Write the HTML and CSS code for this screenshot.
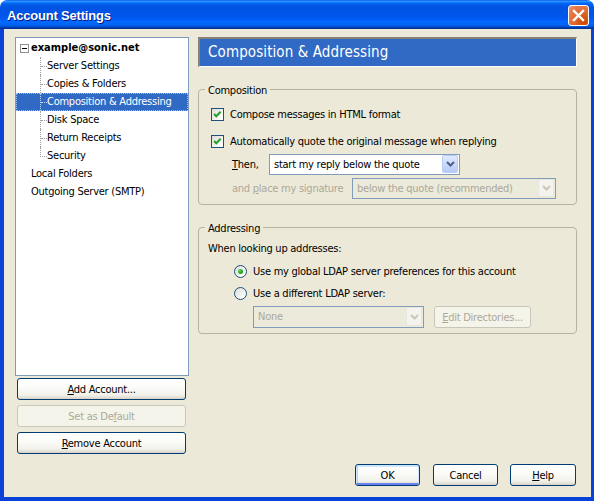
FILE: index.html
```html
<!DOCTYPE html>
<html>
<head>
<meta charset="utf-8">
<title>Account Settings</title>
<link rel="stylesheet" href="styles.css">
</head>
<body>
<div class="window">
  <div class="titlebar">
    <span class="title">Account Settings</span>
    <span class="close"><svg width="13" height="13" viewBox="0 0 13 13"><path d="M2 2 L11 11 M11 2 L2 11" stroke="#fff" stroke-width="2.4" stroke-linecap="square"/></svg></span>
  </div>
  <div class="frame">
    <div class="main">
      <div class="left">
        <div class="tree">
          <div class="row top"><span class="minus"></span><span class="acct">example@sonic.net</span></div>
          <div class="row child"><span class="twig"></span><span>Server Settings</span></div>
          <div class="row child"><span class="twig"></span><span>Copies &amp; Folders</span></div>
          <div class="row child selected"><span class="twig"></span><span>Composition &amp; Addressing</span></div>
          <div class="row child"><span class="twig"></span><span>Disk Space</span></div>
          <div class="row child"><span class="twig"></span><span>Return Receipts</span></div>
          <div class="row child"><span class="twig last"></span><span>Security</span></div>
          <div class="row root">Local Folders</div>
          <div class="row root">Outgoing Server (SMTP)</div>
        </div>
        <button class="btn side"><u>A</u>dd Account...</button>
        <button class="btn side disabled">Set as De<u>f</u>ault</button>
        <button class="btn side"><u>R</u>emove Account</button>
      </div>
      <div class="right">
        <div class="header">Composition &amp; Addressing</div>
        <div class="group comp">
          <span class="legend">Composition</span>
          <div class="crow"><span class="check"><svg width="11" height="11" viewBox="0 0 11 11"><path d="M2.2 5 L4.3 7.3 L8.6 2.8" fill="none" stroke="#21a121" stroke-width="2"/></svg></span>Compose messages in HTML format</div>
          <div class="crow second"><span class="check"><svg width="11" height="11" viewBox="0 0 11 11"><path d="M2.2 5 L4.3 7.3 L8.6 2.8" fill="none" stroke="#21a121" stroke-width="2"/></svg></span>Automatically quote the original message when replying</div>
          <div class="srow then">
            <span class="slabel then-label"><u>T</u>hen,</span>
            <span class="combo reply"><span class="ctext">start my reply below the quote</span><span class="cbtn"><svg width="9" height="6" viewBox="0 0 9 6"><path d="M1 1 L4.5 4.5 L8 1" fill="none" stroke="#4d6185" stroke-width="2"/></svg></span></span>
          </div>
          <div class="srow sig">
            <span class="slabel sig-label dim">and <u>p</u>lace my signature</span>
            <span class="combo off signature"><span class="ctext">below the quote (recommended)</span><span class="cbtn"><svg width="9" height="6" viewBox="0 0 9 6"><path d="M1 1 L4.5 4.5 L8 1" fill="none" stroke="#c9c7ba" stroke-width="2"/></svg></span></span>
          </div>
        </div>
        <div class="group addr">
          <span class="legend">Addressing</span>
          <div class="lrow">When looking up addresses:</div>
          <div class="rrow"><span class="radio on"></span>Use my global LDAP server preferences for this account</div>
          <div class="rrow second"><span class="radio"></span>Use a different LDAP server:</div>
          <div class="drow">
            <span class="combo off none"><span class="ctext">None</span><span class="cbtn"><svg width="9" height="6" viewBox="0 0 9 6"><path d="M1 1 L4.5 4.5 L8 1" fill="none" stroke="#c9c7ba" stroke-width="2"/></svg></span></span>
            <button class="btn disabled edit"><u>E</u>dit Directories...</button>
          </div>
        </div>
      </div>
    </div>
    <div class="footer">
      <button class="btn foot default">OK</button>
      <button class="btn foot cancel">Cancel</button>
      <button class="btn foot help"><u>H</u>elp</button>
    </div>
  </div>
</div>
</body>
</html>
```

FILE: styles.css
```css
html, body {
  margin: 0;
  padding: 0;
  background: #ffffff;
}

body {
  font-family: "DejaVu Sans Condensed", "Liberation Sans", sans-serif;
  font-size: 11px;
  letter-spacing: -0.25px;
  color: #000;
}

.window {
  width: 594px;
  height: 501px;
  display: flex;
  flex-direction: column;
  overflow: hidden;
}

.titlebar {
  height: 29px;
  flex: none;
  display: flex;
  align-items: center;
  justify-content: space-between;
  padding: 0 5px 0 7px;
  border-radius: 7px 7px 0 0;
  background: linear-gradient(to bottom, #0058ee 0%, #3593ff 4%, #288eff 6%, #127dff 8%, #036ffc 10%, #0262ee 14%, #0057e5 20%, #0054e3 24%, #0055eb 56%, #005bf5 66%, #026afe 76%, #0062ef 86%, #0052d6 92%, #0040ab 94%, #003092 100%);
}

.title {
  font-family: "Liberation Sans", sans-serif;
  font-weight: bold;
  font-size: 13px;
  letter-spacing: -0.2px;
  color: #fff;
  text-shadow: 1px 1px 0 #0a1883;
  margin-top: 2px;
}

.close {
  width: 21px;
  height: 21px;
  box-sizing: border-box;
  margin-top: 2px;
  border: 1px solid #fff;
  border-radius: 3px;
  background: radial-gradient(circle at 80% 85%, #cc4600 0%, #dc6527 40%, #e87c52 80%, #f0a088 100%);
  display: flex;
  align-items: center;
  justify-content: center;
}

.close svg {
  display: block;
}

.frame {
  flex: 1;
  background: #ece9d8;
  border-left: 4px solid #0842d8;
  border-right: 3px solid #0842d8;
  border-bottom: 4px solid #0842d8;
  display: flex;
  flex-direction: column;
}

.main {
  display: flex;
  padding: 8px 0 0 11px;
  gap: 9px;
}

.left {
  width: 174px;
  display: flex;
  flex-direction: column;
}

.tree {
  height: 339px;
  box-sizing: border-box;
  border: 1px solid #7f9db9;
  background: #fff;
  padding-top: 1px;
}

.row {
  height: 18px;
  display: flex;
  align-items: center;
  white-space: nowrap;
  line-height: 18px;
}

.row.top {
  padding-left: 4px;
}

.minus {
  width: 9px;
  height: 9px;
  box-sizing: border-box;
  border: 1px solid #919191;
  background: #fff;
  margin-right: 2px;
  display: flex;
  align-items: center;
  justify-content: center;
}

.minus::after {
  content: "";
  width: 5px;
  height: 1px;
  background: #000;
}

.acct {
  font-weight: bold;
  letter-spacing: 0;
}

.twig {
  width: 7px;
  height: 18px;
  box-sizing: border-box;
  margin-left: 24px;
  align-self: flex-start;
  border-left: 1px dotted #a0a0a0;
}

.twig::after {
  content: "";
  display: block;
  width: 6px;
  height: 9px;
  border-bottom: 1px dotted #a0a0a0;
}

.twig.last {
  border-left: none;
}

.twig.last::after {
  border-left: 1px dotted #a0a0a0;
}

.row.selected {
  background: #316ac5;
  color: #fff;
  outline: 1px dotted #a6bde6;
  outline-offset: -1px;
}

.row.selected .twig,
.row.selected .twig::after {
  border-color: #c8d6f0;
}

.row.root {
  padding-left: 15px;
}

.btn {
  font-family: inherit;
  font-size: 11px;
  letter-spacing: -0.25px;
  color: #000;
  height: 22px;
  padding: 0;
  box-sizing: border-box;
  border: 1px solid #003c74;
  border-radius: 3px;
  background: linear-gradient(to bottom, #ffffff 0%, #fbfbf9 40%, #f2f1ea 80%, #e3e0d6 92%, #d6d0c5 100%);
}

.btn u {
  text-decoration: underline;
}

.btn.disabled {
  border-color: #c9c7ba;
  color: #aca899;
  background: #f5f4ea;
}

.btn.side {
  width: 169px;
  margin-left: 2px;
  margin-top: 5px;
}

.btn.side:first-of-type {
  margin-top: 2px;
}

.right {
  width: 379px;
  display: flex;
  flex-direction: column;
}

.header {
  height: 30px;
  box-sizing: border-box;
  border-top: 2px solid #858275;
  border-left: 2px solid #858275;
  border-bottom: 1px solid #fff;
  border-right: 1px solid #fff;
  background: #316ac5;
  color: #fff;
  font-size: 15px;
  letter-spacing: 0.1px;
  line-height: 27px;
  padding-left: 8px;
  white-space: nowrap;
}

.group {
  position: relative;
  border: 1px solid #b6b3a1;
  border-radius: 4px;
  margin-top: 22px;
}

.legend {
  position: absolute;
  top: -6px;
  left: 6px;
  padding: 0 3px;
  line-height: 13px;
  background: #ece9d8;
}

.comp {
  padding: 15px 0 5px 12px;
}

.crow {
  height: 18px;
  display: flex;
  align-items: center;
  white-space: nowrap;
}

.crow.second {
  margin-top: 9px;
}

.check {
  width: 13px;
  height: 13px;
  box-sizing: border-box;
  border: 1px solid #1c5180;
  background: linear-gradient(135deg, #dcdcd7 0%, #ffffff 90%);
  margin-right: 6px;
  display: flex;
  align-items: center;
  justify-content: center;
}

.check svg {
  display: block;
}

.srow {
  display: flex;
  align-items: center;
  white-space: nowrap;
}

.srow.then {
  margin-top: 4px;
}

.srow.sig {
  margin-top: 3px;
}

.slabel {
  margin-left: 21px;
}

.then-label {
  width: 37px;
}

.sig-label {
  width: 120px;
}

.dim {
  color: #aca899;
}

.combo {
  height: 21px;
  box-sizing: border-box;
  border: 1px solid #7f9db9;
  background: #fff;
  display: flex;
  align-items: stretch;
}

.combo.reply {
  width: 191px;
}

.combo.signature {
  width: 204px;
}

.combo.none {
  width: 171px;
  height: 22px;
}

.combo.off {
  background: #ebeadb;
  color: #aca899;
}

.ctext {
  flex: 1;
  padding-left: 4px;
  line-height: 19px;
  white-space: nowrap;
  overflow: hidden;
}

.cbtn {
  width: 16px;
  margin: 0 1px 1px 0;
  box-sizing: border-box;
  border: 1px solid #b9cdf7;
  border-radius: 2px;
  background: linear-gradient(to bottom, #e2eafe 0%, #cbdafc 50%, #b6caf7 100%);
  display: flex;
  align-items: center;
  justify-content: center;
}

.combo.off .cbtn {
  border-color: #e8e7df;
  background: #f4f3ee;
}

.cbtn svg {
  display: block;
}

.addr {
  padding: 13px 0 5px 9px;
}

.lrow {
  height: 16px;
  line-height: 16px;
  white-space: nowrap;
}

.rrow {
  height: 18px;
  display: flex;
  align-items: center;
  padding-left: 26px;
  white-space: nowrap;
  margin-top: 5px;
}

.rrow.second {
  margin-top: 4px;
}

.radio {
  width: 13px;
  height: 13px;
  box-sizing: border-box;
  border: 1px solid #1c5180;
  border-radius: 50%;
  background: linear-gradient(135deg, #dcdcd7 0%, #ffffff 90%);
  margin-right: 6px;
  display: flex;
  align-items: center;
  justify-content: center;
}

.radio.on::after {
  content: "";
  width: 5px;
  height: 5px;
  border-radius: 50%;
  background: radial-gradient(circle at 35% 35%, #5fd35f 0%, #21a121 60%, #1a8a1a 100%);
}

.drow {
  display: flex;
  align-items: center;
  padding-left: 45px;
  margin-top: 4px;
}

.btn.edit {
  width: 97px;
  margin-left: 10px;
}

.footer {
  display: flex;
  justify-content: flex-end;
  padding-right: 15px;
  margin-top: 10px;
}

.btn.foot {
  width: 65px;
}

.btn.cancel {
  margin-left: 13px;
}

.btn.help {
  width: 66px;
  margin-left: 12px;
}

.btn.default {
  box-shadow: inset 0 1px 0 1px #cee7ff, inset 0 -1px 0 1px #6982ee, inset 1px 0 0 1px #b8d3fb;
}
```
